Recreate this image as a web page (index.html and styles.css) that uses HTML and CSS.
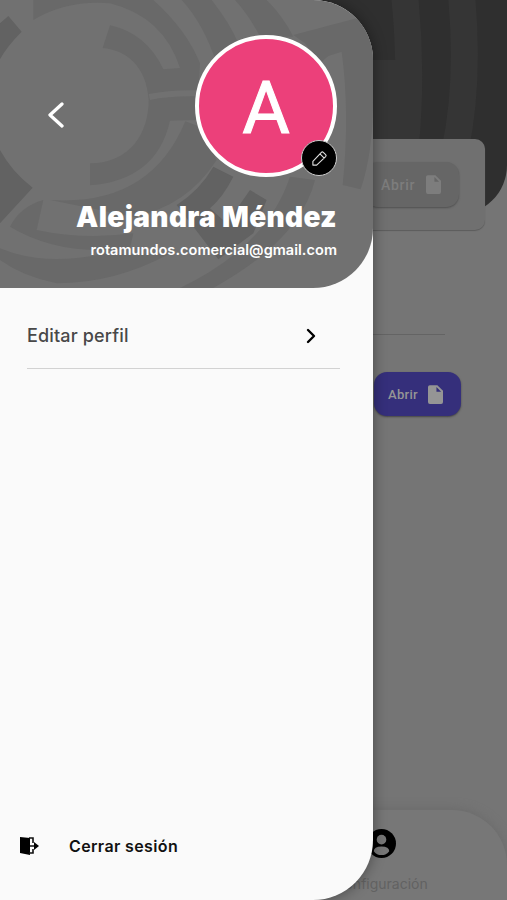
FILE: index.html
```html
<!DOCTYPE html>
<html lang="es">
<head>
  <meta charset="UTF-8">
  <meta name="viewport" content="width=device-width, initial-scale=1">
  <title>Perfil</title>
  <link rel="stylesheet" href="styles.css">
</head>
<body>
<div class="screen">
  <div class="hero">
    <svg class="hero-art" viewBox="0 0 507 215" preserveAspectRatio="none" fill="none" stroke="#353535">
      <path d="M404 -10Q413 70 405 150" stroke-width="27"/>
      <path d="M383 60V150" stroke-width="44"/>
      <path d="M461 -10Q470 80 455 150" stroke-width="27"/>
    </svg>
  </div>
  <main class="page">
    <section class="card">
      <button class="btn btn-muted">Abrir
        <svg class="file" viewBox="0 0 16 20"><path d="M2 0h8l6 6v12q0 2-2 2H2q-2 0-2-2V2q0-2 2-2z"/><path class="fold" d="M9 2v5h5z"/></svg>
      </button>
    </section>
    <hr class="page-line">
    <button class="btn btn-purple">Abrir
      <svg class="file" viewBox="0 0 16 20"><path d="M2 0h8l6 6v12q0 2-2 2H2q-2 0-2-2V2q0-2 2-2z"/><path class="fold" d="M9 2v5h5z"/></svg>
    </button>
  </main>
  <nav class="tabs">
    <div class="tab">
      <svg class="user" viewBox="0 0 30 30"><circle cx="15" cy="15" r="15"/><circle class="skin" cx="15" cy="11" r="5"/><path class="skin" d="M7 23q0-5 8-5t8 5q-3 4-8 4t-8-4z"/></svg>
      <span>Configuración</span>
    </div>
  </nav>

  <aside class="drawer">
    <header class="profile">
      <svg class="profile-art" viewBox="0 0 1119 864" fill="none">
        <g fill="#696969">
          <path d="M330 76Q440 100 490 208L540 204Q490 50 330 10Q200 0 100 60V0H460Q560 90 600 190L590 360L510 362Q470 540 270 556V490C390 490 446 400 446 300C440 200 380 150 308 144z"/>
          <path d="M556 364L600 380L650 480Q560 620 400 650L150 600Q450 620 556 364z"/>
          <path d="M545 0H635Q690 70 715 130L650 190Q610 70 545 0z"/>
          <path d="M705 0H800Q850 50 880 110L780 110Q750 50 705 0z"/>
          <path d="M880 105L1095 48L1119 120V300Q1119 460 1082 568L1028 555Q1050 340 1025 155L985 168L960 190L915 130z"/>
          <path d="M870 530L945 540Q900 720 640 864H540Q800 740 870 530z"/>
          <path d="M130 600Q60 620 30 680Q180 770 390 745L400 700Q250 720 110 690z"/>
          <path d="M0 745Q130 800 320 760Q430 770 520 755Q350 850 170 850Q70 830 0 780z"/>
        </g>
        <g fill="#626262">
          <path d="M0 70L25 48L65 95Q20 140 0 178z"/>
          <path d="M0 450Q35 515 98 563L0 670z"/>
          <path d="M640 500L700 530Q670 590 630 625L680 670L750 570L800 600L760 700L655 778L530 615Q600 570 640 500z"/>
        </g>
        <path d="M448 291Q510 278 592 280" stroke="#717171" stroke-width="18"/>
      </svg>
      <button class="back" aria-label="Volver">
        <svg viewBox="0 0 16 26"><path d="M14 2L2 13L14 24"/></svg>
      </button>
      <div class="identity">
        <div class="avatar">A
          <span class="edit"><svg viewBox="0 0 18 18"><path d="M2 16V12L11 2.500q1-1 2 0l2.500 2.500q1 1 0 2L6 16zM9.500 4l4.500 4.500"/></svg></span>
        </div>
        <h1>Alejandra Méndez</h1>
        <p>rotamundos.comercial@gmail.com</p>
      </div>
    </header>
    <a class="menu-item">
      <span>Editar perfil</span>
      <svg viewBox="0 0 10 16"><path d="M2 2L8 8L2 14"/></svg>
    </a>
    <a class="logout">
      <svg viewBox="0 0 20 20"><path d="M1 1L11 2V19L1 17z"/><path class="line" d="M10 2h4v5M14 13v4h-4M11 10h7"/><path d="M15 6l5 4-5 4z"/></svg>
      <span>Cerrar sesión</span>
    </a>
  </aside>
</div>
</body>
</html>
```

FILE: styles.css
```css
* { box-sizing: border-box; }
body { margin: 0; font-family: Inter, "Liberation Sans", sans-serif; }
h1, p { margin: 0; }
button { border: none; padding: 0; font-family: inherit; }
svg { display: block; flex: none; }

.screen { position: relative; width: 507px; height: 900px; overflow: hidden; background: #757575; display: flex; flex-direction: column; }
.hero { position: absolute; top: 0; left: 0; width: 507px; height: 215px; background: #2f2f2f; border-radius: 0 0 50px 0; overflow: hidden; }
.hero-art { width: 100%; height: 100%; }

.page { position: relative; flex: 1; padding: 139px 22px 0 330px; }
.card { height: 91px; padding: 23px 0 0 35px; background: #707070; border-radius: 10px; box-shadow: 0 1px 1px #5c5c5c; }
.btn { display: flex; align-items: center; justify-content: space-between; height: 45px; border-radius: 13px; font-family: Roboto, sans-serif; font-size: 13px; font-weight: 500; letter-spacing: 0.3px; }
.file { width: 15px; height: 19px; fill: currentColor; }
.btn-muted { width: 94px; padding: 0 18px 0 16px; background: #666; color: #7d7d7d; font-size: 14px; letter-spacing: 0.7px; box-shadow: 0 1px 2px #505050; }
.btn-muted .fold { fill: #666; }
.page-line { margin: 104px 40px 37px 0; border: none; border-top: 1px solid #646464; }
.btn-purple { width: 87px; height: 44px; margin-left: 44px; padding: 0 18px 0 14px; background: #352f7b; color: #959595; box-shadow: 0 1px 2px #444; }
.btn-purple .fold { fill: #352f7b; }

.tabs { position: relative; height: 90px; padding: 19px 77px 0 0; background: #777; border-radius: 0 55px 0 0; box-shadow: 0 -2px 10px #6c6c6c; display: flex; justify-content: flex-end; }
.tab { display: flex; flex-direction: column; align-items: center; gap: 17px; width: 98px; font-size: 14px; line-height: 17px; color: #626262; }
.user { width: 29px; height: 29px; fill: #000; }
.user .skin { fill: #777; }

.drawer { position: absolute; top: 0; left: 0; width: 373px; height: 900px; background: #fafafa; border-radius: 0 60px 60px 0; box-shadow: 0 0 14px rgba(0, 0, 0, 0.4); overflow: hidden; display: flex; flex-direction: column; }
.profile { position: relative; height: 288px; padding: 35px 36px 0 48px; background: #717171; border-radius: 0 0 60px 0; overflow: hidden; display: flex; justify-content: space-between; }
.profile-art { position: absolute; top: 0; left: 0; width: 373px; height: 288px; }
.back { position: relative; width: 16px; height: 26px; margin-top: 67px; background: none; }
.back svg { width: 16px; height: 26px; fill: none; stroke: #fff; stroke-width: 3.3; stroke-linecap: round; stroke-linejoin: round; }
.identity { position: relative; display: flex; flex-direction: column; align-items: flex-end; color: #fff; white-space: nowrap; }
.avatar { position: relative; width: 142px; height: 142px; border: 4px solid #fff; border-radius: 50%; background: #ec407a; font: 400 73px/138px Roboto, sans-serif; text-align: center; -webkit-text-stroke: 1px #fff; }
.edit { position: absolute; right: -4px; bottom: -3px; width: 36px; height: 36px; border: 1px solid #ccc; border-radius: 50%; background: #000; display: flex; align-items: center; justify-content: center; }
.edit svg { width: 17px; height: 17px; fill: none; stroke: #ddd; stroke-width: 1.2; stroke-linejoin: round; }
.identity h1 { margin-top: 23px; font-size: 28px; line-height: 34px; font-weight: 900; letter-spacing: 0.35px; }
.identity p { margin-top: 6px; font-size: 14.5px; line-height: 20px; font-weight: 600; letter-spacing: 0.04px; }

.menu-item { display: flex; align-items: center; justify-content: space-between; height: 66px; margin: 15px 33px 0 27px; padding: 0 24px 0 0; border-bottom: 1px solid #d2d2d2; font-size: 18px; font-weight: 500; letter-spacing: 0.15px; color: #484848; }
.menu-item svg { width: 10px; height: 16px; fill: none; stroke: #000; stroke-width: 2.4; stroke-linecap: round; stroke-linejoin: round; }
.logout { display: flex; align-items: center; gap: 30px; margin: auto 0 43px 19px; height: 22px; font-size: 16px; font-weight: 600; letter-spacing: 0.37px; color: #111; }
.logout svg { width: 20px; height: 20px; }
.logout .line { fill: none; stroke: #111; stroke-width: 1.6; }
```
